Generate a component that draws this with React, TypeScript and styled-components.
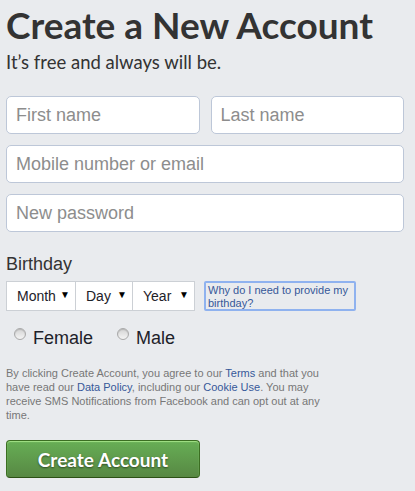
import React from "react";
import styled, { createGlobalStyle } from "styled-components";

const GlobalStyle = createGlobalStyle`
  html, body {
    margin: 0;
    padding: 0;
    background: #e9ebee;
  }
  body {
    font-family: "Liberation Sans", Arial, sans-serif;
    color: #1d2129;
  }
`;

const Page = styled.div`
  width: 415px;
  height: 491px;
  box-sizing: border-box;
  padding: 4px 11px 0 6px;
  overflow: hidden;
`;

const Title = styled.h1`
  margin: 0;
  font-family: Lato, "Open Sans", sans-serif;
  font-weight: 700;
  font-size: 37px;
  line-height: 42px;
  color: #333;
`;

const Subtitle = styled.div`
  margin-top: 4px;
  font-family: Lato, "Open Sans", sans-serif;
  font-size: 18.5px;
  line-height: 24px;
  color: #333;
`;

const Fields = styled.div`
  margin-top: 22px;
  display: flex;
  flex-direction: column;
  gap: 11px;
`;

const Row = styled.div`
  display: flex;
  gap: 11px;
`;

const TextInput = styled.input`
  flex: 1;
  min-width: 0;
  height: 38px;
  box-sizing: border-box;
  padding: 0 9px;
  border: 1px solid #bdc7d8;
  border-radius: 5px;
  background: #fff;
  font-family: "Liberation Sans", Arial, sans-serif;
  font-size: 18px;
  color: #1d2129;
  outline: none;
  &::placeholder {
    color: #8d8d8d;
  }
`;

const Label = styled.div`
  margin-top: 20px;
  font-size: 18px;
  line-height: 24px;
  color: #333;
`;

const BirthdayRow = styled.div`
  margin-top: 5px;
  display: flex;
  align-items: center;
`;

const SelectWrap = styled.div<{ $width: number }>`
  position: relative;
  width: ${(p) => p.$width}px;
  height: 30px;
  box-sizing: border-box;
  border: 1px solid #ccd0d5;
  margin-left: -1px;
  background: #fff;
  &:first-child {
    margin-left: 0;
  }
  &::after {
    content: "▼";
    position: absolute;
    right: 5px;
    top: 7px;
    font-size: 10px;
    color: #000;
    pointer-events: none;
  }
`;

const Select = styled.select`
  appearance: none;
  width: 100%;
  height: 100%;
  border: none;
  background: transparent;
  padding: 0 0 0 10px;
  font-family: "Liberation Sans", Arial, sans-serif;
  font-size: 14px;
  color: #1d2129;
  outline: none;
`;

const WhyLink = styled.a`
  margin-left: 9px;
  width: 152px;
  height: 30px;
  box-sizing: border-box;
  border: 2px solid #8fb2ef;
  border-radius: 2px;
  padding: 1px 2px;
  font-size: 11px;
  line-height: 13px;
  color: #365899;
  text-decoration: none;
`;

const GenderRow = styled.div`
  margin-top: 15px;
  display: flex;
  gap: 24px;
  padding-left: 8px;
`;

const RadioLabel = styled.label`
  display: flex;
  align-items: center;
  font-size: 18px;
  line-height: 24px;
  color: #1d2129;
`;

const Radio = styled.input`
  appearance: none;
  margin: 0 7px 8px 0;
  width: 12px;
  height: 12px;
  box-sizing: border-box;
  border: 1px solid #a9a9a9;
  border-radius: 50%;
  background: linear-gradient(#d4d4d4, #f4f4f4);
  box-shadow: inset 0 1px 1px rgba(0, 0, 0, 0.15);
`;

const Legal = styled.p`
  margin: 16px 0 0;
  width: 320px;
  font-size: 11px;
  line-height: 14px;
  color: #777;
`;

const Link = styled.a`
  color: #365899;
  text-decoration: none;
`;

const CreateButton = styled.button`
  margin-top: 18px;
  width: 194px;
  height: 38px;
  border: 1px solid;
  border-color: #3b6e22 #3b6e22 #2c5115;
  border-radius: 4px;
  background: linear-gradient(#67ae55, #578843);
  box-shadow: inset 0 1px 1px #a4e388;
  font-family: Lato, "Open Sans", sans-serif;
  font-weight: 700;
  font-size: 19px;
  color: #fff;
  text-shadow: 0 1px 2px rgba(0, 0, 0, 0.5);
  cursor: pointer;
`;

export default function App() {
  return (
    <Page>
      <GlobalStyle />
      <Title>Create a New Account</Title>
      <Subtitle>It’s free and always will be.</Subtitle>
      <Fields>
        <Row>
          <TextInput placeholder="First name" />
          <TextInput placeholder="Last name" />
        </Row>
        <Row>
          <TextInput placeholder="Mobile number or email" />
        </Row>
        <Row>
          <TextInput type="password" placeholder="New password" />
        </Row>
      </Fields>
      <Label>Birthday</Label>
      <BirthdayRow>
        <SelectWrap $width={70}>
          <Select defaultValue="">
            <option value="">Month</option>
          </Select>
        </SelectWrap>
        <SelectWrap $width={58}>
          <Select defaultValue="">
            <option value="">Day</option>
          </Select>
        </SelectWrap>
        <SelectWrap $width={63}>
          <Select defaultValue="">
            <option value="">Year</option>
          </Select>
        </SelectWrap>
        <WhyLink href="#">Why do I need to provide my birthday?</WhyLink>
      </BirthdayRow>
      <GenderRow>
        <RadioLabel>
          <Radio type="radio" name="sex" />
          Female
        </RadioLabel>
        <RadioLabel>
          <Radio type="radio" name="sex" />
          Male
        </RadioLabel>
      </GenderRow>
      <Legal>
        By clicking Create Account, you agree to our <Link href="#">Terms</Link>{" "}
        and that you have read our <Link href="#">Data Policy</Link>, including
        our <Link href="#">Cookie Use</Link>. You may receive SMS Notifications
        from Facebook and can opt out at any time.
      </Legal>
      <CreateButton>Create Account</CreateButton>
    </Page>
  );
}
